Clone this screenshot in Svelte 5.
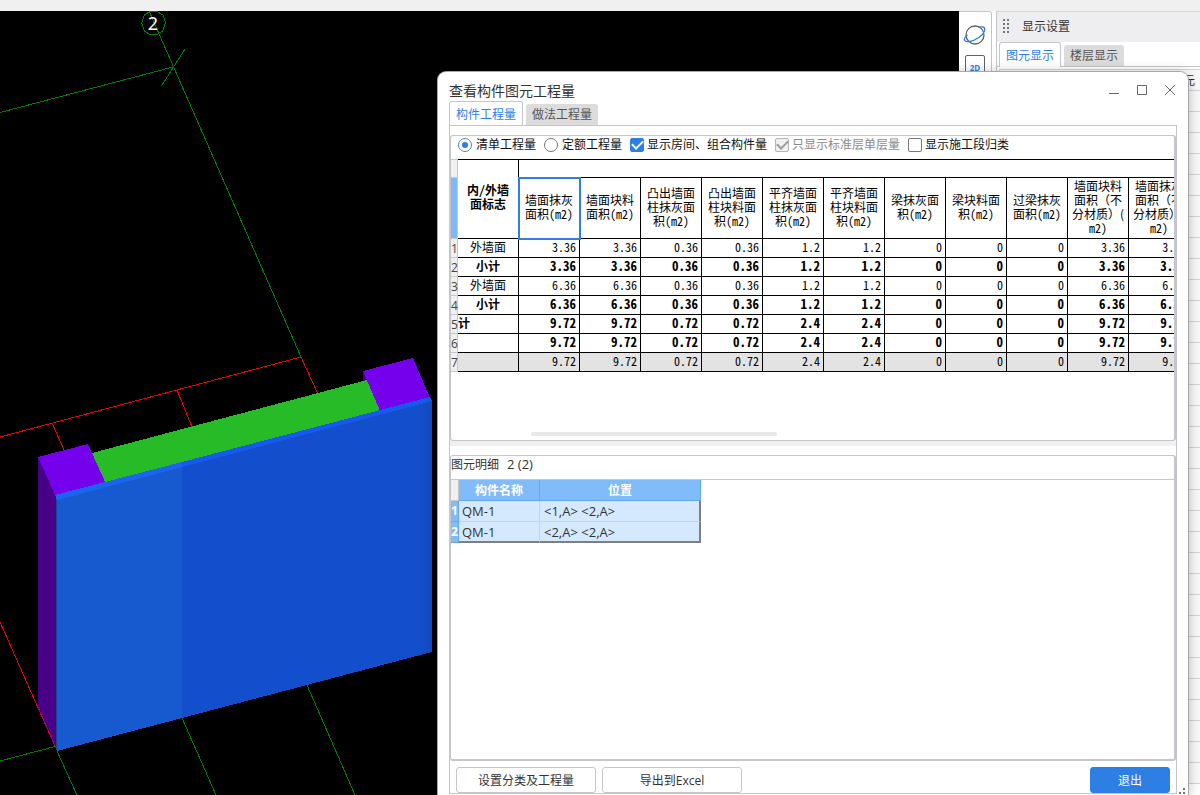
<!--
	Quantity viewer
	3D model canvas, display settings panel and the component quantity dialog
-->
<script lang="ts">
	interface QuantityRow {
		label: string;
		kind: 'item' | 'sum' | 'total' | 'footer';
		values: string[];
	}

	const columns: string[][] = [
		['墙面抹灰', '面积(m2)'],
		['墙面块料', '面积(m2)'],
		['凸出墙面', '柱抹灰面', '积(m2)'],
		['凸出墙面', '柱块料面', '积(m2)'],
		['平齐墙面', '柱抹灰面', '积(m2)'],
		['平齐墙面', '柱块料面', '积(m2)'],
		['梁抹灰面', '积(m2)'],
		['梁块料面', '积(m2)'],
		['过梁抹灰', '面积(m2)'],
		['墙面块料', '面积（不', '分材质）(', 'm2)'],
		['墙面抹灰', '面积（不', '分材质）(', 'm2)']
	];

	function values(area: string, raised: string, flush: string) {
		return [area, area, raised, raised, flush, flush, '0', '0', '0', area, area];
	}

	const rows: QuantityRow[] = [
		{ label: '外墙面', kind: 'item', values: values('3.36', '0.36', '1.2') },
		{ label: '小计', kind: 'sum', values: values('3.36', '0.36', '1.2') },
		{ label: '外墙面', kind: 'item', values: values('6.36', '0.36', '1.2') },
		{ label: '小计', kind: 'sum', values: values('6.36', '0.36', '1.2') },
		{ label: '计', kind: 'total', values: values('9.72', '0.72', '2.4') },
		{ label: '', kind: 'total', values: values('9.72', '0.72', '2.4') },
		{ label: '', kind: 'footer', values: values('9.72', '0.72', '2.4') }
	];

	const elements = [
		{ name: 'QM-1', position: '<1,A> <2,A>' },
		{ name: 'QM-1', position: '<2,A> <2,A>' }
	];

	let mode = $state('list');
	let showRooms = $state(true);
	let singleFloor = $state(true);
	let bySection = $state(false);
	let dialogTab = $state('component');
	let panelTab = $state('element');
</script>

<div class="app">
	<div class="top-strip"></div>

	<div class="workspace">
		<main class="canvas">
			<svg width="960" height="784" viewBox="0 11 960 784" role="img" aria-label="三维模型">
				<g class="axis">
					<path d="M0 112.500L173 67M185 49L161.500 86M149 11L301 357" />
					<path d="M0 761L57 746M57 751L77 795M182 718L216 795M307 685L355 795" />
					<path d="M150 11.500L157 11.500L163 15L165.500 23L162.500 31L157 34.500L150 34.500L144.500 31L141.500 23L144.500 15Z" />
				</g>
				<g class="guide">
					<path d="M0 437L301 357L318 394M52 423L64 450M177 390L192 427M0 622L55 746" />
				</g>
				<text class="axis-label" x="153" y="30">2</text>

				<polygon points="38,457 56,495 56,747 38,707" fill="#470088" />
				<polygon points="38,457 88,444 106,484 56,497" fill="#7400ec" />
				<polygon points="363,371 368,382 363,382" fill="#470088" />
				<polygon points="92,453 367,380 381,412 106,484" fill="#27bc27" />
				<polygon points="363,371 413,358 431,400 380,411" fill="#7400ec" />
				<polygon points="56,498 182,465 182,718 57,751" fill="#1759cf" />
				<polygon points="182,465 431.500,400 431.500,652 182,718" fill="#134fcd" />
				<polygon points="418,405 431.500,401 431.500,652 418,656" fill="#144bc2" opacity="0.5" />
				<polygon points="55,495 182,462 182,467 57,500" fill="#1b64ed" />
				<polygon points="182,462 430,397 432,401 182,467" fill="#155aec" />
				<path d="M56.500 499V750" stroke="#1c4394" />
				<path d="M38 707L55 746" stroke="#b00044" />
			</svg>
		</main>

		<aside class="tool-strip">
			<button class="tool" aria-label="动态观察">
				<svg width="24" height="24" viewBox="0 0 24 24" fill="none" stroke-width="1.300">
					<circle cx="12" cy="12" r="9" stroke="#596273" />
					<path d="M4.500 12C-0.500 16 0.500 19.500 6.500 18.500C13 17.500 20 12.500 21.500 8C22.500 4 20 3 15.500 4.500" stroke="#2d7de0" />
				</svg>
			</button>
			<button class="tool flat" aria-label="二维视图">2D</button>
		</aside>

		<aside class="settings">
			<header class="settings-head">
				<span class="grip"></span>
				<span>显示设置</span>
			</header>
			<div class="tabs settings-tabs" role="tablist">
				<button class="tab" class:active={panelTab === 'element'} onclick={() => (panelTab = 'element')}>图元显示</button>
				<button class="tab" class:active={panelTab === 'floor'} onclick={() => (panelTab = 'floor')}>楼层显示</button>
			</div>
			<div class="settings-list">
				<div class="settings-row head">元</div>
				{#each Array(33) as _}
					<div class="settings-row"></div>
				{/each}
			</div>
		</aside>
	</div>

	<section class="dialog" role="dialog" aria-labelledby="dialog-title">
		<header class="title-bar">
			<h1 id="dialog-title">查看构件图元工程量</h1>
			<div class="window-buttons">
				<button aria-label="最小化">
					<svg width="12" height="12" viewBox="0 0 12 12"><path d="M1 9.500H11" /></svg>
				</button>
				<button aria-label="最大化">
					<svg width="12" height="12" viewBox="0 0 12 12"><path d="M1.500 1.500H10.500V10.500H1.500Z" /></svg>
				</button>
				<button aria-label="关闭">
					<svg width="12" height="12" viewBox="0 0 12 12"><path d="M1 1L11 11M11 1L1 11" /></svg>
				</button>
			</div>
		</header>

		<div class="tabs" role="tablist">
			<button class="tab" class:active={dialogTab === 'component'} onclick={() => (dialogTab = 'component')}>构件工程量</button>
			<button class="tab" class:active={dialogTab === 'method'} onclick={() => (dialogTab = 'method')}>做法工程量</button>
		</div>

		<div class="dialog-body">
			<div class="pane quantities">
				<form class="options">
					<label><input type="radio" name="mode" value="list" bind:group={mode} />清单工程量</label>
					<label><input type="radio" name="mode" value="quota" bind:group={mode} />定额工程量</label>
					<label class="tick"><input type="checkbox" bind:checked={showRooms} />显示房间、组合构件量</label>
					<label class="tick disabled"><input type="checkbox" disabled bind:checked={singleFloor} />只显示标准层单层量</label>
					<label class="tick"><input type="checkbox" bind:checked={bySection} />显示施工段归类</label>
				</form>

				<div class="grid-scroll">
					<table class="grid">
						<colgroup>
							<col class="index-col" />
							<col span="12" />
						</colgroup>
						<thead>
							<tr class="band">
								<th class="index"></th>
								<th class="corner" rowspan="2">内/外墙<br />面标志</th>
								<th colspan="11"></th>
							</tr>
							<tr class="names">
								<th class="index current"></th>
								{#each columns as lines, i}
									<th class:selected={i === 0}>
										{#each lines as line}
											<span class:full={/[（）]/.test(line)}>{line}</span>
										{/each}
									</th>
								{/each}
							</tr>
						</thead>
						<tbody>
							{#each rows as row, i}
								<tr class={row.kind}>
									<th class="index">{i + 1}</th>
									<td class="label">{row.label}</td>
									{#each row.values as value}
										<td>{value}</td>
									{/each}
								</tr>
							{/each}
						</tbody>
					</table>
				</div>
				<div class="scroll-thumb"></div>
			</div>

			<div class="splitter"></div>

			<div class="pane details">
				<h2>图元明细 <span>2 (2)</span></h2>
				<table class="elements">
					<thead>
						<tr>
							<th class="index"></th>
							<th class="name">构件名称</th>
							<th class="position">位置</th>
						</tr>
					</thead>
					<tbody>
						{#each elements as element, i}
							<tr>
								<th class="index">{i + 1}</th>
								<td>{element.name}</td>
								<td>{element.position}</td>
							</tr>
						{/each}
					</tbody>
				</table>
			</div>

			<footer class="actions">
				<button class="button">设置分类及工程量</button>
				<button class="button">导出到Excel</button>
				<button class="button primary">退出</button>
			</footer>
		</div>
		<svg class="resize-grip" width="6" height="6" viewBox="0 0 6 6" fill="#707478">
			<path d="M4 0h2v2h-2zM4 4h2v2h-2zM0 4h2v2h-2z" />
		</svg>
	</section>
</div>

<style>
	:global(body) {
		margin: 0;
		font-family: 'Open Sans', 'Noto Sans CJK SC', sans-serif;
		font-size: 12px;
		color: #333;
	}

	* {
		box-sizing: border-box;
	}

	button {
		font: inherit;
		color: inherit;
		padding: 0;
		border: 0;
		background: none;
	}

	.app {
		--blue: #2d7fe3;
		--line: #c5c6ca;
		position: relative;
		display: flex;
		flex-direction: column;
		height: 100vh;
		overflow: hidden;
		background: #fff;
	}

	.top-strip {
		flex: none;
		height: 11px;
		background: #f0f0f0;
	}

	.workspace {
		flex: 1;
		display: flex;
		min-height: 0;
	}

	/* Model canvas */
	.canvas {
		flex: 1;
		min-width: 0;
		overflow: hidden;
		background: #000;
	}

	.canvas svg {
		display: block;
		shape-rendering: crispEdges;
	}

	.axis path {
		fill: none;
		stroke: #008000;
	}

	.guide path {
		fill: none;
		stroke: #f00000;
	}

	.axis-label {
		fill: #fff;
		font-family: 'Noto Sans', sans-serif;
		font-size: 18px;
		text-anchor: middle;
	}

	.tool-strip {
		flex: none;
		width: 33px;
		display: flex;
		flex-direction: column;
		align-items: center;
		gap: 8px;
		padding-top: 11px;
		border: 1px solid var(--line);
		border-left: 0;
		border-radius: 0 3px 0 0;
	}

	.tool {
		width: 24px;
		height: 24px;
	}

	.tool svg {
		display: block;
	}

	.tool.flat {
		width: 20px;
		border: 1px solid #596273;
		border-radius: 2px;
		color: var(--blue);
		font-size: 8px;
		font-weight: 700;
		line-height: 24px;
	}

	/* Display settings */
	.settings {
		flex: none;
		width: 204px;
		margin-left: 4px;
		border-top: 1px solid #d5d5d8;
		border-left: 1px solid var(--line);
	}

	.settings-head {
		display: flex;
		align-items: center;
		gap: 12px;
		height: 30px;
		padding: 0 0 2px 5px;
		background: #eeeef1;
	}

	.grip {
		width: 8px;
		height: 16px;
		background: radial-gradient(circle, #777 1px, transparent 1px) 0 0 / 4px 4px;
	}

	.tabs {
		display: flex;
		align-items: flex-end;
		gap: 3px;
	}

	.tab {
		height: 21px;
		padding: 0 6px;
		border-radius: 3px 3px 0 0;
		background: #dcdcdc;
		color: #555;
		line-height: 22px;
	}

	.tab.active {
		height: 25px;
		margin-bottom: -1px;
		border: 1px solid var(--line);
		border-bottom: 0;
		background: #fff;
		color: var(--blue);
		line-height: 25px;
	}

	.settings-tabs {
		height: 25px;
		padding-left: 2px;
		border-bottom: 1px solid var(--line);
	}

	.settings-list {
		margin: 2px 0 0 2px;
		border-top: 1px solid #d5d5d8;
		border-left: 1px solid #d5d5d8;
		background: #fafafa;
	}

	.settings-row {
		height: 21px;
		padding-right: 5px;
		border-bottom: 1px solid #d5d5d8;
		line-height: 21px;
		text-align: right;
	}

	/* Dialog window */
	.dialog {
		position: absolute;
		top: 72px;
		right: 12px;
		bottom: 0;
		left: 438px;
		display: flex;
		flex-direction: column;
		padding: 0 11px 1px;
		border-radius: 8px 8px 0 0;
		background: #fff;
		box-shadow:
			0 0 0 1px #a8a8a8,
			0 2px 14px rgba(0, 0, 0, 0.3);
	}

	.title-bar {
		flex: none;
		display: flex;
		align-items: flex-end;
		justify-content: space-between;
		height: 29px;
	}

	h1 {
		margin: 0;
		font-size: 14px;
		font-weight: 400;
		line-height: 20px;
	}

	.window-buttons {
		display: flex;
		gap: 16px;
		margin: 0 1px 5px 0;
	}

	.window-buttons button {
		height: 12px;
	}

	.window-buttons svg {
		display: block;
		fill: none;
		stroke: #666;
	}

	.dialog-body {
		flex: 1;
		display: flex;
		flex-direction: column;
		min-height: 0;
		padding-top: 9px;
		border: 1px solid var(--line);
	}

	.pane {
		display: flex;
		flex-direction: column;
		border: 1px solid var(--line);
		border-right-width: 2px;
		border-radius: 3px;
		overflow: hidden;
	}

	.quantities {
		flex: none;
		height: 306px;
	}

	.options {
		flex: none;
		display: flex;
		align-items: center;
		gap: 8px;
		height: 23px;
		padding: 0 0 6px 7px;
	}

	.options label {
		display: flex;
		align-items: center;
		gap: 4px;
		color: #111;
		line-height: 17px;
		white-space: nowrap;
	}

	.options .tick {
		gap: 3px;
	}

	.options .disabled {
		color: #8b8b8b;
	}

	input {
		appearance: none;
		display: grid;
		place-items: center;
		width: 14px;
		height: 14px;
		margin: 0;
		border: 1px solid #777;
		background: #fff;
	}

	input[type='radio'] {
		border-radius: 50%;
	}

	input[type='radio']:checked {
		border-color: #5b83b5;
	}

	input[type='radio']:checked::before {
		content: '';
		width: 6px;
		height: 6px;
		border-radius: 50%;
		background: var(--blue);
	}

	input[type='checkbox'] {
		border-radius: 2px;
	}

	input[type='checkbox']:checked {
		border-color: var(--blue);
		background: var(--blue);
	}

	input[type='checkbox']:checked::before {
		content: '';
		width: 9px;
		height: 5px;
		border: solid #fff;
		border-width: 0 0 2px 2px;
		transform: translateY(-1px) rotate(-45deg);
	}

	input[type='checkbox']:disabled {
		border-color: #b5b5b5;
		background: #f0f0f0;
	}

	input[type='checkbox']:disabled::before {
		border-color: #999;
	}

	/* Quantity grid */
	.grid-scroll {
		overflow: hidden;
	}

	.grid {
		table-layout: fixed;
		width: 739px;
		border-spacing: 0;
		color: #000;
		font-family: 'Noto Sans CJK SC', sans-serif;
		font-feature-settings: 'hwid';
	}

	.grid col {
		width: 61px;
	}

	.grid .index-col {
		width: 7px;
	}

	.grid th,
	.grid td {
		height: 19px;
		padding: 0;
		border: solid #000;
		border-width: 0 1px 1px 0;
		font-weight: 400;
		line-height: 14px;
	}

	.grid td {
		padding-right: 3px;
		line-height: 15px;
		text-align: right;
		vertical-align: top;
	}

	.grid .band th {
		border-top-width: 1px;
	}

	.grid .names th {
		height: 61px;
		padding-bottom: 2px;
	}

	.grid .names span {
		display: block;
		white-space: nowrap;
	}

	.grid .names .full {
		font-feature-settings: normal;
	}

	.grid .corner,
	.grid .sum td,
	.grid .total td {
		font-weight: 700;
	}

	.grid .band .corner {
		padding-bottom: 4px;
	}

	.grid .sum td,
	.grid .total td {
		font-size: 13px;
	}

	.grid .label,
	.grid .sum .label,
	.grid .total .label {
		padding: 0;
		font-size: 12px;
		text-align: center;
	}

	.grid .total .label {
		text-align: left;
	}

	.grid .footer td {
		background: #e3e3e3;
	}

	.grid .index {
		border-color: #c8c8c8;
		background: #f0f0f0;
		color: #444;
		font-family: 'Open Sans', sans-serif;
		line-height: 17px;
	}

	.grid .current {
		background: #7db9f9;
	}

	.grid .selected {
		outline: 2px solid var(--blue);
		outline-offset: -1px;
	}

	.scroll-thumb {
		width: 34%;
		height: 4px;
		margin: auto 0 4px 80px;
		border-radius: 2px;
		background: #e8e8e8;
	}

	.splitter {
		flex: none;
		height: 5px;
		margin-bottom: 9px;
		background: #f0f0f0;
	}

	/* Element details */
	.details {
		flex: 1;
		border-bottom-width: 2px;
	}

	h2 {
		flex: none;
		display: flex;
		gap: 8px;
		height: 24px;
		margin: 0;
		border-bottom: 1px solid var(--line);
		font-size: 12px;
		font-weight: 400;
		line-height: 17px;
	}

	h2 span {
		font-size: 13px;
	}

	.elements {
		table-layout: fixed;
		width: 250px;
		border-spacing: 0;
	}

	.elements th,
	.elements td {
		height: 21px;
		padding: 0;
		border: solid #64a7ec;
		border-width: 0 1px 1px 0;
		background: #80bbfa;
		color: #fff;
		line-height: 18px;
	}

	.elements thead th {
		padding-top: 1px;
	}

	.elements td {
		padding-left: 3px;
		border-color: #cbd2db;
		background: #d5e9fe;
		color: #333;
		font-size: 13px;
		text-align: left;
	}

	.elements .index {
		width: 8px;
	}

	.elements thead .index {
		border-color: var(--line);
		background: #f0f0f0;
	}

	.elements .name {
		width: 81px;
	}

	.elements td:last-child {
		padding-left: 4px;
		border-right: 2px solid #7f7f7f;
	}

	.elements tr:last-child td {
		border-bottom: 2px solid #7f7f7f;
	}

	.actions {
		flex: none;
		display: flex;
		gap: 6px;
		padding: 6px 6px 0;
	}

	.button {
		width: 140px;
		height: 26px;
		border: 1px solid var(--line);
		border-radius: 3px;
		background: #fff;
	}

	.button.primary {
		width: 80px;
		margin-left: auto;
		border-color: var(--blue);
		background: var(--blue);
		color: #fff;
	}

	.resize-grip {
		position: absolute;
		right: 3px;
		bottom: 1px;
	}
</style>
